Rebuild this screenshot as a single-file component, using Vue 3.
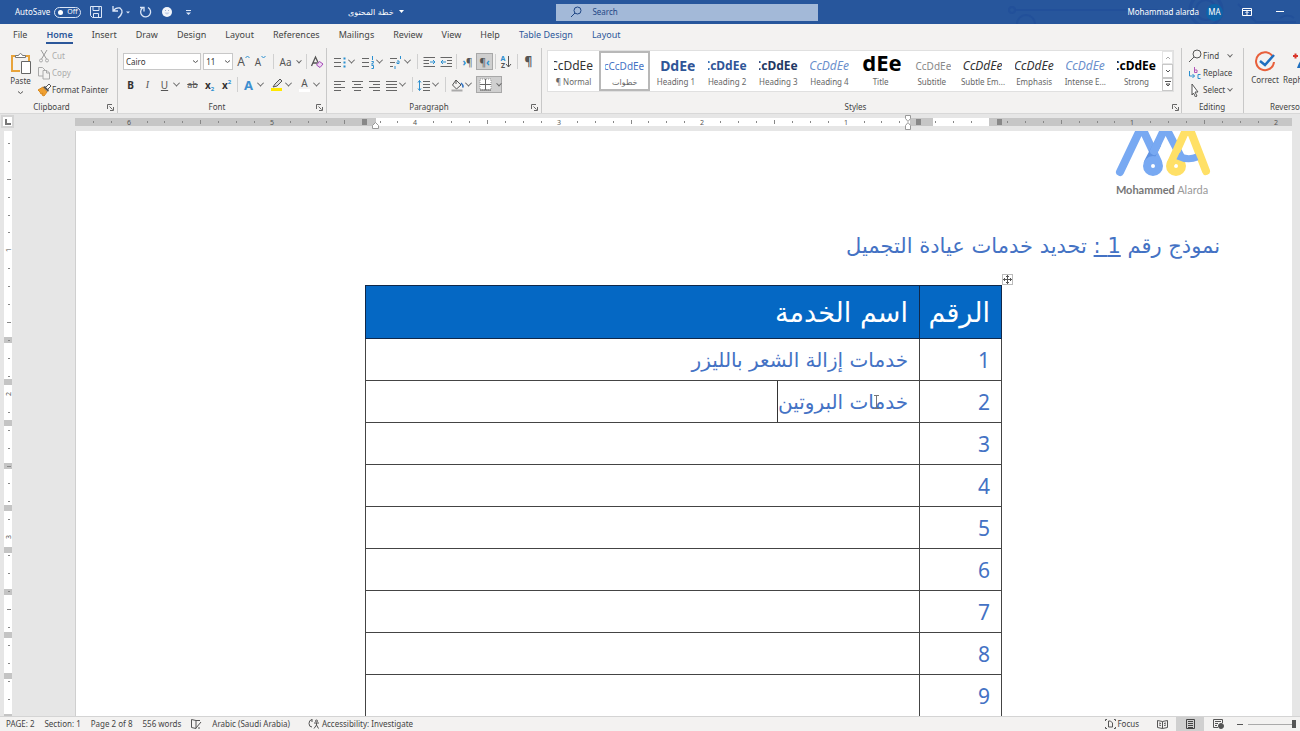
<script setup>
import { ref } from 'vue'

const tabs = [
  { name: 'File' }, { name: 'Home', active: true }, { name: 'Insert' }, { name: 'Draw' },
  { name: 'Design' }, { name: 'Layout' }, { name: 'References' }, { name: 'Mailings' },
  { name: 'Review' }, { name: 'View' }, { name: 'Help' },
  { name: 'Table Design', context: true }, { name: 'Layout', context: true },
]

const styles = [
  { name: '¶ Normal', look: 'normal', sample: 'CcDdEe' },
  { name: 'خطوات', look: 'steps', sample: 'CcCcDdEe', selected: true },
  { name: 'Heading 1', look: 'h1', sample: 'DdEe' },
  { name: 'Heading 2', look: 'h2', sample: 'CcDdEe' },
  { name: 'Heading 3', look: 'h3', sample: 'CcDdEe' },
  { name: 'Heading 4', look: 'h4', sample: 'CcDdEe' },
  { name: 'Title', look: 'title', sample: 'dEe' },
  { name: 'Subtitle', look: 'subtitle', sample: 'CcDdEe' },
  { name: 'Subtle Em...', look: 'subtle', sample: 'CcDdEe' },
  { name: 'Emphasis', look: 'emphasis', sample: 'CcDdEe' },
  { name: 'Intense E...', look: 'intense', sample: 'CcDdEe' },
  { name: 'Strong', look: 'strong', sample: 'CcDdEe' },
]

const services = ref([
  'خدمات إزالة الشعر بالليزر', 'خدمات البروتين', '', '', '', '', '', '', '',
])

const lines = (rows) => rows.map(([a, b], i) => `<path d="M${a} ${3.5 + i * 3}H${b}" stroke="#666"/>`).join('')
const icons = {
  bullets: '<path d="M1 3.5H8M1 7.5H8M1 11.5H8" stroke="#666"/><path d="M10.5 2.5h2v2h-2zM10.5 6.5h2v2h-2zM10.5 10.5h2v2h-2z" fill="#2b8fd0"/>',
  numbers: '<path d="M1 3.5H8M1 7.5H8M1 11.5H8" stroke="#666"/><path d="M11.5 1v4M10.5 6.5h2v1l-2 1.500h2M10.500 10.500h2v3h-2" stroke="#2b8fd0"/>',
  multi: '<path d="M1 3.500H8M1 7.500H6M1 11.500H4" stroke="#666"/><path d="M11.500 1v3M8 6h2v2.500H8V7M6 11v3" stroke="#2b8fd0"/>',
  outdent: '<path d="M1.500 2.500H13M1.500 5.500H7M1.500 8.500H7M1.500 11.500H13" stroke="#666"/><path d="M8 7h5M11 5l2 2-2 2" stroke="#2b8fd0"/>',
  indent: '<path d="M1.500 2.500H13M8 5.500h5M8 8.500h5M1.500 11.500H13" stroke="#666"/><path d="M7 7H2M4 5L2 7l2 2" stroke="#2b8fd0"/>',
  left: lines([[1, 12], [1, 8], [1, 12], [1, 8]]),
  center: lines([[2, 13], [4, 11], [2, 13], [4, 11]]),
  right: lines([[2, 13], [6, 13], [2, 13], [6, 13]]),
  justify: lines([[2, 13], [2, 13], [2, 13], [2, 13]]),
  spacing: '<path d="M6 3.500h7M6 6.500h7M6 9.500h7M6 12.500h7" stroke="#666"/><path d="M2.500 2.500v10M1 4.500l1.500-2 1.500 2M1 10.500l1.500 2 1.500-2" stroke="#2b8fd0"/>',
  shade: '<path d="M6 2l5 5-4.500 4L2.500 7zM6 2v4" stroke="#555"/><path d="M11 5q3 3 1.500 4.500" stroke="#2b6fc0" stroke-width="1.500"/><path d="M1.500 12.500h11" stroke="#aaa" stroke-width="2"/>',
  borders: '<path d="M2 2h11v11H2z" fill="#fff" stroke="#999" stroke-dasharray="1 1"/><path d="M7.500 2v11M2 7.500h11M2 13h11" stroke="#666"/>',
  find: '<circle cx="9" cy="5" r="4" stroke="#555"/><path d="M6 8l-5 5" stroke="#555"/>',
  select: '<path d="M4 1l6 8H7l2 4-1.500 1-2-4L4 12z" fill="#fff" stroke="#555"/>',
  cut: '<path d="M4 1l5.500 9M10 1L4.500 10" stroke="#999"/><circle cx="4" cy="11.500" r="1.500" stroke="#aaa"/><circle cx="10" cy="11.500" r="1.500" stroke="#aaa"/>',
  copy: '<path d="M6 10H1.500V1.500h4L8 4" stroke="#aaa"/><path d="M6 4.500h4l2.500 2.500v6H6zM9.500 4.500V7h3" stroke="#aaa"/>',
  painter: '<path d="M1 7l5-3 4 5-3 4-2-1 1-2-2 1-1-2z" fill="#f0a030" stroke="#d88a20"/><path d="M6 4l2-1 4 4-1 2z" fill="#555"/><path d="M9 4l3-3 2 2-3 3" fill="#fff" stroke="#555"/>',
}
const alignButtons = [['left', 'Align left'], ['center', 'Center'], ['right', 'Align right'], ['justify', 'Justify']]

// One inch on the rulers, divided into eighths.
const inch = 143.4
const makeTicks = (from, to, origin) => {
  const out = []
  for (let i = Math.ceil((from - origin) / inch * 8); origin + i * inch / 8 < to; i++) {
    const kind = i % 8 === 0 ? 'num' : i % 4 === 0 ? 'half' : 'dot'
    out.push({ pos: Math.round(origin + i * inch / 8), kind, label: Math.abs(i / 8) })
  }
  return out
}
const hTicks = makeTicks(1, 1216, 914).filter((t) => t.label !== 0)
const vTicks = makeTicks(4, 585, -24)
const rowMarks = [206, 248, 289, 332, 374, 416, 458, 501, 542, 583]
</script>

<template>
  <div class="app">
    <header class="titlebar">
      <svg class="pattern" width="300" height="24" fill="none" stroke="#22509a" stroke-width="2">
        <path d="M14 10h144" /><circle cx="12" cy="10" r="3" /><circle cx="26" cy="24" r="9" />
        <circle cx="206" cy="10" r="16" stroke-width="3" /><circle cx="206" cy="10" r="10" />
        <path d="M238 4l18 18h40M280 18q8-5 14 0" />
      </svg>
      <div class="quick">
        <label class="autosave">AutoSave <input type="checkbox" role="switch" /><span class="switch"><i></i>Off</span></label>
        <button aria-label="Save"><svg width="14" height="14" fill="none" stroke="#dbe6f7"><path d="M1.500 1.500h11v11h-9l-2-2zM4 1.500v4h6v-4M4.500 12.500v-4h5v4" /></svg></button>
        <button class="undo" aria-label="Undo"><svg width="20" height="14" fill="none" stroke="#dbe6f7" stroke-width="1.300"><path d="M2 1v5h5M2 6q3-4 7-3 5 4-2 10" /><path d="M15 6.500h4l-2 2z" fill="#dbe6f7" stroke="none" /></svg></button>
        <button aria-label="Redo"><svg width="14" height="14" fill="none" stroke="#dbe6f7" stroke-width="1.300"><path d="M1 2.500h4v4M9 2.500a5 5 0 1 1-5.500.5" /></svg></button>
        <button aria-label="Feedback"><svg width="14" height="14"><circle cx="7" cy="7" r="5" fill="#f2f5fa" /><path d="M4.500 7.500q2.500 4 5 0" fill="#c3cfe6" /><path d="M5 5.500h1M8 5.500h1" stroke="#9fb0d4" /></svg></button>
        <button aria-label="Customize quick access"><svg width="14" height="14"><path d="M5 5.500h5" stroke="#dbe6f7" /><path d="M5 7.500h5L7.500 10z" fill="#dbe6f7" /></svg></button>
      </div>
      <button class="docname"><svg width="5" height="4"><path d="M0 0h5L2.500 3z" fill="#fff" /></svg><span dir="rtl">خطة المحتوى</span></button>
      <label class="search">
        <svg width="12" height="12" fill="none" stroke="#1f4684"><circle cx="7.500" cy="4.500" r="3.500" /><path d="M5 7l-4 4" /></svg>
        <input type="search" placeholder="Search" aria-label="Search" />
      </label>
      <div class="account">
        <span>Mohammad alarda</span><span class="avatar">MA</span>
        <button aria-label="Ribbon display options"><svg width="10" height="8" fill="none" stroke="#fff"><path d="M.5.5h9v7h-9zM.5 2.500h9M5 7V3.500M3.500 5L5 3.500 6.500 5" /></svg></button>
        <button aria-label="Minimize"><svg width="8" height="8"><path d="M0 3.500h8" stroke="#fff" /></svg></button>
      </div>
    </header>

    <nav class="tabs">
      <button v-for="(t, i) in tabs" :key="i" :class="{ active: t.active, context: t.context }">{{ t.name }}</button>
    </nav>

    <section class="ribbon">
      <div class="group clipboard">
        <div class="body">
          <button class="paste">
            <svg width="22" height="23" fill="none"><path d="M8 4H2v15h8M15 4h4v5" stroke="#e8a33a" stroke-width="2" /><path d="M5.500 5.500V3.500h3q2-4 4 0h3v2z" fill="#fff" stroke="#777" /><path d="M11.500 9.500h9v12h-9z" fill="#fff" stroke="#666" /></svg>
            <span>Paste</span>
            <svg width="5" height="4" fill="none" stroke="#555"><path d="M0 .5l2.500 2L5 .5" /></svg>
          </button>
          <div class="stack">
            <button class="off"><svg width="14" height="14" fill="none" v-html="icons.cut"></svg>Cut</button>
            <button class="off"><svg width="14" height="14" fill="none" v-html="icons.copy"></svg>Copy</button>
            <button><svg width="14" height="14" fill="none" v-html="icons.painter"></svg>Format Painter</button>
          </div>
        </div>
        <div class="label"><span>Clipboard</span><button class="launch" aria-label="Clipboard options"><svg width="7" height="7" fill="none" stroke="#666"><path d="M.5 5V.5H5M2.500 2.500l3 3M6.500 3v3.500H3" /></svg></button></div>
      </div>

      <div class="group font">
        <div class="body rows">
          <div class="row">
            <select class="face" aria-label="Font"><option>Cairo</option></select>
            <select class="size" aria-label="Font size"><option>11</option></select>
            <button class="ic grow" aria-label="Grow font">A<svg width="5" height="4" fill="none" stroke="#2b8fd0"><path d="M.5 3L2.500 1l2 2" /></svg></button>
            <button class="ic shrink" aria-label="Shrink font">A<svg width="5" height="4" fill="none" stroke="#2b8fd0"><path d="M.5 1l2 2 2-2" /></svg></button>
            <i class="sep"></i>
            <button class="ic case">Aa<span class="chev"></span></button>
            <i class="sep"></i>
            <button class="ic" aria-label="Clear formatting"><svg width="14" height="14" fill="none"><path d="M1.500 11L5.500 2l3 6.500M3 8h4" stroke="#555" stroke-width="1.300" /><path d="M6.500 10l3-3.500 3.500 2.500-3 3.500z" fill="#efd9f3" stroke="#a54cb8" /></svg></button>
          </div>
          <div class="row">
            <button class="ic b">B</button><button class="ic i">I</button><button class="ic u">U</button><button class="dd" aria-label="Underline options"></button>
            <button class="ic s">ab</button><button class="ic x">x<sub>2</sub></button><button class="ic x">x<sup>2</sup></button>
            <i class="sep"></i>
            <button class="ic fx">A</button><button class="dd" aria-label="Text effects options"></button>
            <button class="ic" aria-label="Highlight"><svg width="14" height="14" fill="none"><path d="M3 9l2-3 5-5 2 2-5 5z" fill="#ddd" stroke="#555" /><path d="M1 11.500h11" stroke="#ffe800" stroke-width="3" /></svg></button><button class="dd" aria-label="Highlight options"></button>
            <button class="ic fc">A</button><button class="dd" aria-label="Font colour options"></button>
          </div>
        </div>
        <div class="label"><span>Font</span><button class="launch" aria-label="Font options"><svg width="7" height="7" fill="none" stroke="#666"><path d="M.5 5V.5H5M2.500 2.500l3 3M6.500 3v3.500H3" /></svg></button></div>
      </div>

      <div class="group para">
        <div class="body rows">
          <div class="row">
            <template v-for="n in ['bullets', 'numbers', 'multi']" :key="n">
              <button class="ic" :aria-label="n"><svg width="14" height="14" fill="none" v-html="icons[n]"></svg></button><button class="dd" :aria-label="n + ' options'"></button>
            </template>
            <i class="sep"></i>
            <button class="ic" aria-label="Decrease indent"><svg width="14" height="14" fill="none" v-html="icons.outdent"></svg></button>
            <button class="ic" aria-label="Increase indent"><svg width="14" height="14" fill="none" v-html="icons.indent"></svg></button>
            <i class="sep"></i>
            <button class="ic dir"><b>›</b>¶</button>
            <button class="ic dir on">¶<b>‹</b></button>
            <i class="sep"></i>
            <button class="ic sort" aria-label="Sort"><span><b>A</b><em>Z</em></span><svg width="7" height="12" fill="none" stroke="#555"><path d="M3.500 0v11M1 8l2.500 3L6 8" /></svg></button>
            <i class="sep"></i>
            <button class="ic pil">¶</button>
          </div>
          <div class="row">
            <button v-for="[n, l] in alignButtons" :key="n" class="ic" :aria-label="l"><svg width="14" height="14" fill="none" v-html="icons[n]"></svg></button><button class="dd" aria-label="Justify options"></button>
            <i class="sep"></i>
            <button class="ic" aria-label="Line spacing"><svg width="14" height="14" fill="none" v-html="icons.spacing"></svg></button><button class="dd" aria-label="Spacing options"></button>
            <i class="sep"></i>
            <button class="ic" aria-label="Shading"><svg width="14" height="14" fill="none" v-html="icons.shade"></svg></button><button class="dd" aria-label="Shading options"></button>
            <button class="ic on wide" aria-label="Borders"><svg width="15" height="15" fill="none" v-html="icons.borders"></svg><span class="chev"></span></button>
          </div>
        </div>
        <div class="label"><span>Paragraph</span><button class="launch" aria-label="Paragraph options"><svg width="7" height="7" fill="none" stroke="#666"><path d="M.5 5V.5H5M2.500 2.500l3 3M6.500 3v3.500H3" /></svg></button></div>
      </div>

      <div class="group styles">
        <div class="body">
          <div class="gallery">
            <button v-for="s in styles" :key="s.name" class="style" :class="[s.look, { selected: s.selected }]">
              <span class="sample"><span>{{ s.sample }}</span></span>
              <span class="name">{{ s.name }}</span>
            </button>
            <div class="scroll">
              <button aria-label="Previous styles"><svg width="6" height="4" fill="none" stroke="#aaa"><path d="M1 3l2-2 2 2" /></svg></button>
              <button aria-label="Next styles"><svg width="6" height="4" fill="none" stroke="#555"><path d="M1 1l2 2 2-2" /></svg></button>
              <button aria-label="More styles"><svg width="6" height="6" fill="none" stroke="#555"><path d="M0 .5h6M1 3h4L3 5z" /></svg></button>
            </div>
          </div>
        </div>
        <div class="label"><span>Styles</span><button class="launch" aria-label="Style options"><svg width="7" height="7" fill="none" stroke="#666"><path d="M.5 5V.5H5M2.500 2.500l3 3M6.500 3v3.500H3" /></svg></button></div>
      </div>

      <div class="group editing">
        <div class="body">
          <div class="stack">
            <button><svg width="14" height="14" fill="none" v-html="icons.find"></svg>Find<span class="chev far"></span></button>
            <button class="swap"><svg width="14" height="14" fill="none"><path d="M6.500 1v5.500h2.500V4H6.500" stroke="#b455b8" /><path d="M12.500 8.500H10v4h2.500M1.500 5v5h5M4.500 8l2 2-2 2" stroke="#2b8fd0" /></svg>Replace</button>
            <button><svg width="14" height="14" fill="none" v-html="icons.select"></svg>Select<span class="chev"></span></button>
          </div>
        </div>
        <div class="label"><span>Editing</span></div>
      </div>

      <div class="group reverso">
        <div class="body">
          <button class="big"><svg width="22" height="22" fill="none"><path d="M19 6a9 9 0 1 0 1 5" stroke="#e8603c" stroke-width="2" /><path d="M6 10l5 4 9-10" stroke="#1e6fbf" stroke-width="2.500" /></svg>Correct</button>
          <button class="big"><svg width="22" height="22" fill="none"><path d="M1 5h5M3.500 2.500v5" stroke="#d9362b" stroke-width="2" /><path d="M5 17q3-10 12-13l-6 13z" fill="#1e6fbf" /></svg>Rephrase</button>
        </div>
        <div class="label"><span>Reverso</span></div>
      </div>
    </section>

    <div class="hruler">
      <button class="tabstop" aria-label="Tab stop"><svg width="6" height="6"><path d="M1 0v5h5" fill="none" stroke="#777" stroke-width="2" /></svg></button>
      <svg class="htrack" height="17" aria-hidden="true">
        <rect y="4" width="100%" height="8" fill="#c6c6c6" />
        <rect x="301" y="4" width="534" height="8" fill="#fff" /><rect x="858" y="4" width="56" height="8" fill="#fff" />
        <g fill="#888"><rect x="287" y="5" width="5" height="6" /><rect x="841" y="5" width="5" height="6" /><rect x="922" y="5" width="5" height="6" /></g>
        <template v-for="t in hTicks" :key="t.pos">
          <text v-if="t.kind === 'num'" :x="t.pos" y="11" class="tick" text-anchor="middle">{{ t.label }}</text>
          <rect v-else :x="t.pos" :y="t.kind === 'half' ? 6 : 7" width="1" :height="t.kind === 'half' ? 4 : 2" fill="#888" />
        </template>
        <g fill="#fff" stroke="#999"><path d="M297.500 14.500v-3l3-3 3 3v3z" /><path d="M830.500 1.500h5v3l-2.500 3-2.500-3zM830.500 11.500l2.500-3 2.500 3v4h-5z" /></g>
      </svg>
    </div>

    <main class="workspace">
      <svg class="vruler" width="12" height="585" aria-hidden="true">
        <rect x="4" width="8" height="585" fill="#fff" />
        <rect v-for="m in rowMarks" :key="m" x="4" :y="m" width="8" height="6" fill="#c4c4c4" />
        <template v-for="t in vTicks" :key="t.pos">
          <text v-if="t.kind === 'num' && t.label < 4" class="tick" text-anchor="middle" :transform="`translate(11 ${t.pos}) rotate(-90)`">{{ t.label }}</text>
          <rect v-else :x="t.kind === 'half' ? 7 : 8" :y="t.pos" :width="t.kind === 'half' ? 4 : 2" height="1" fill="#888" />
        </template>
      </svg>
      <article class="page" dir="rtl">
        <div class="logo" dir="ltr">
          <svg width="100" height="48" fill="none" stroke-width="8" stroke-linecap="round" stroke-linejoin="round">
            <path d="M8 41L27 1h5l14 30" stroke="#78a9f2" />
            <path d="M45 14L36 31" stroke="#5f92e2" />
            <path d="M42 20L51 1h5l13 25" stroke="#78a9f2" />
            <circle cx="41" cy="35" r="6" stroke="#78a9f2" />
            <path d="M59 32L73 1h6l15 39" stroke="#ffe066" />
            <circle cx="64" cy="35" r="6" stroke="#ffe066" />
            <path d="M66 25q10 5 19 1" stroke="#78a9f2" stroke-width="7" stroke-linecap="butt" />
          </svg>
          <p><b>Mohammed</b> Alarda</p>
        </div>
        <h1>نموذج رقم <u>1 :</u> تحديد خدمات عيادة التجميل</h1>
        <div class="sheet">
          <button class="move" aria-label="Move table"><svg width="9" height="9" fill="none" stroke="#555"><path d="M4.500 0v9M0 4.500h9M3 1.500h3M3 7.500h3M1.500 3v3M7.500 3v3" /></svg></button>
          <table>
            <thead><tr><th class="num">الرقم</th><th>اسم الخدمة</th></tr></thead>
            <tbody>
              <tr v-for="(s, i) in services" :key="i">
                <td class="num">{{ i + 1 }}</td>
                <td><div class="cell">{{ s }}<template v-if="i === 1"><i class="caret"></i><svg class="ibeam" width="7" height="14" fill="none" stroke="#777"><path d="M1 .5h5M1 13.500h5M3.500 1v12" /></svg></template></div></td>
              </tr>
            </tbody>
          </table>
        </div>
      </article>
    </main>

    <footer class="status">
      <span>PAGE: 2</span><span>Section: 1</span><span>Page 2 of 8</span><span>556 words</span>
      <svg width="11" height="10" fill="none" stroke="#555"><path d="M5 9.500L.5 8.500v-8L5 1.500zM5 1.500h4M5 9l5-6M7 9h2" /></svg>
      <span>Arabic (Saudi Arabia)</span>
      <span class="acc"><svg width="11" height="10" fill="none" stroke="#555"><path d="M4 .5Q1 1 1 4.500T4 8M4 0v3M6 4h5M8.500 4v2L6 9.500M8.500 6l2 3.500" /><circle cx="8.500" cy="2" r="1" /></svg>Accessibility: Investigate</span>
      <div class="views">
        <button class="focus"><svg width="11" height="10" fill="none" stroke="#555"><path d="M.5 2V.5H2M9 .5h1.500V2M.5 8v1.500H2M9 9.500h1.500V8M3.500 2v6h4V4l-2-2z" /></svg>Focus</button>
        <button aria-label="Read mode"><svg width="11" height="9" fill="none" stroke="#555"><path d="M5.500 1.500L.5.5v7l5 1 5-1v-7zM5.500 1.500v7M2 3l2 .5M2 5l2 .5M7 3.500L9 3M7 5.500L9 5" /></svg></button>
        <button class="current" aria-label="Print layout"><svg width="9" height="10" fill="none" stroke="#444"><path d="M.5.5h8v9h-8zM2 2.500h5M2 4.500h5M2 6.500h5M2 8.500h5" /></svg></button>
        <button aria-label="Web layout"><svg width="11" height="10" fill="none" stroke="#555"><path d="M9.500 4V.5h-9v8H5M2 2.500h6M2 4.500h3M2 6.500h2" /><circle cx="8" cy="7" r="2.500" fill="#555" /></svg></button>
        <button class="minus" aria-label="Zoom out"><svg width="6" height="6"><path d="M0 3.500h6" stroke="#555" /></svg></button>
        <input type="range" aria-label="Zoom" min="0" max="100" value="100" />
      </div>
    </footer>
  </div>
</template>

<style>
body { background: #e6e6e6; }
</style>

<style scoped>
* { box-sizing: border-box; }
.app { display: flex; flex-direction: column; height: 100vh; overflow: hidden; font: 9px/12px "Noto Sans", "Open Sans", "DejaVu Sans", sans-serif; color: #444; background: #e6e6e6; }
button { display: inline-flex; align-items: center; justify-content: center; padding: 0; border: 0; background: none; font: inherit; color: inherit; white-space: nowrap; }
svg { flex: none; }
.titlebar { position: relative; display: flex; align-items: center; height: 24px; flex: none; background: #27569c; color: #fff; font-size: 8px; }
.pattern { position: absolute; right: 0; top: 0; }
.quick { display: flex; align-items: center; gap: 10px; width: 348px; padding-left: 15px; }
.autosave { display: flex; align-items: center; gap: 4px; margin-right: -2px; }
.autosave input { position: absolute; opacity: 0; width: 26px; height: 12px; margin: 0; }
.switch { display: flex; align-items: center; gap: 4px; width: 27px; height: 11px; border: 1px solid #dbe6f7; border-radius: 6px; padding-left: 3px; font-size: 7px; }
.switch i { width: 5px; height: 5px; border-radius: 50%; background: #fff; }
.undo { margin: 0 -2px; }
.quick button:nth-last-child(-n+2) { margin-left: -3px; }
.docname { flex-direction: row-reverse; gap: 5px; font: 8px "DejaVu Sans", sans-serif; }
.search { position: absolute; left: 42.8%; width: 20.1%; height: 17px; display: flex; align-items: center; gap: 10px; padding-left: 14px; background: #a3b9d8; }
.search input { width: 100px; border: 0; padding: 0; background: none; font: inherit; outline: 0; }
.search input::placeholder { color: #1f4684; opacity: 1; }
.account { position: relative; margin-left: auto; display: flex; align-items: center; padding-right: 16px; }
.avatar { display: grid; place-items: center; width: 17px; height: 17px; margin: 0 19px 0 7px; border-radius: 50%; background: #0f63a8; }
.account button + button { margin-left: 24px; }
.tabs { display: flex; gap: 19px; height: 24px; flex: none; padding: 1px 13px 0; background: #f3f2f1; }
.tabs button { height: 19px; padding-top: 2px; border-bottom: 2px solid transparent; }
.tabs .active { font-weight: 600; color: #2b579a; border-color: #2b579a; }
.tabs .context { color: #2b579a; }
.ribbon { display: flex; height: 66px; flex: none; background: #f3f2f1; border-bottom: 1px solid #d8d8d8; font-size: 8px; }
.group { display: flex; flex-direction: column; flex: none; border-right: 1px solid #c8c8c8; }
.body { display: flex; height: 53px; }
.label { position: relative; display: flex; justify-content: center; height: 12px; line-height: 12px; padding-right: 14px; }
.launch { position: absolute; right: 3px; top: 3px; }
.clipboard { width: 118px; }
.paste { flex-direction: column; width: 36px; height: 46px; padding-left: 5px; margin-top: 2px; }
.paste svg:last-child { margin-top: 4px; }
.stack { display: flex; flex-direction: column; align-items: flex-start; gap: 1px; padding: 0 0 0 1px; }
.stack button { height: 16px; gap: 1px; }
.off { color: #aaa; }
.font { width: 209px; padding-left: 4px; }
.rows { flex-direction: column; gap: 6px; padding-top: 5px; }
.row { display: flex; align-items: center; height: 17px; }
.face, .size { height: 17px; border: 1px solid #c8c8c8; border-radius: 0; padding: 0 2px; appearance: none; font: inherit; color: #333; background: #fff url("data:image/svg+xml,%3Csvg xmlns='http://www.w3.org/2000/svg' width='5' height='4'%3E%3Cpath d='M0 .5l2.500 2 2.500-2' fill='none' stroke='%23555'/%3E%3C/svg%3E") no-repeat right 2px center; }
.face { width: 79px; margin: 0 2px 0 1px; }
.size { width: 30px; }
.ic { width: 17px; height: 17px; flex: none; font-size: 10px; color: #555; }
.ic sup, .ic sub { font-size: 6px; color: #2b8fd0; line-height: 6px; }
.ic sup { align-self: flex-start; margin-top: 3px; }
.ic sub { align-self: flex-end; margin-bottom: 1px; }
.grow { margin-left: 2px; font-size: 12px; }
.shrink { margin-right: 2px; }
.grow svg, .shrink svg { align-self: flex-start; margin-top: 2px; }
.case { width: 28px; gap: 3px; }
.sep { width: 1px; height: 15px; margin: 0 2px; background: #d0d0d0; }
.dd { width: 11px; height: 17px; padding-right: 4px; }
.dd::before, .chev { content: ""; width: 4px; height: 4px; border: solid #666; border-width: 0 1px 1px 0; transform: rotate(45deg) translate(-1px, -1px); }
.b, .x { font-weight: 700; color: #333; }
.i { font-style: italic; font-family: "Liberation Serif", serif; }
.u { text-decoration: underline; }
.s { text-decoration: line-through; font-size: 9px; }
.fx { font-weight: 700; font-size: 13px; color: #3d8fd0; }
.fc { border-bottom: 3px solid #fff; height: 14px; width: 11px; margin: 0 3px; }
.para { width: 215px; padding-left: 4px; }
.on { background: #cfcfcf; border: 1px solid #a8a8a8; }
.wide { width: 26px; gap: 2px; }
.dir b { color: #2b8fd0; }
.sort span { display: flex; flex-direction: column; font-size: 7px; line-height: 7px; }
.sort b { color: #2b8fd0; }
.sort em { font-style: normal; font-weight: 700; }
.pil { font-size: 12px; font-weight: 700; }
.styles { flex: 1 0 640px; min-width: 0; padding: 2px 7px 0 5px; }
.styles .body { height: 51px; }
.styles .label { padding-right: 10px; }
.styles .launch { right: -5px; }
.gallery { display: flex; width: 100%; height: 42px; border: 1px solid #e0e0e0; background: #fff; }
.style { flex: 1 1 51px; min-width: 0; flex-direction: column; justify-content: flex-start; height: 40px; padding-top: 5px; }
.style.selected { border: 2px solid #b8b8b8; padding-top: 3px; }
.sample { display: flex; justify-content: flex-end; align-items: center; width: 39px; height: 20px; overflow: hidden; font-size: 12px; line-height: 20px; color: #333; }
.name { height: 12px; line-height: 12px; color: #666; }
.selected .sample { font-size: 10px; color: #4472c4; }
.h1 .sample { font-size: 14px; font-weight: 700; color: #2f5597; }
.h2 .sample { font-weight: 700; color: #2f5597; }
.h3 .sample { font-weight: 700; color: #1f3864; }
.h4 .sample, .intense .sample { font-style: italic; color: #6a8fcc; }
.title .sample { font-size: 22px; font-weight: 700; color: #000; width: 42px; line-height: 12px; align-items: flex-start; }
.subtitle .sample { font-size: 10px; color: #888; }
.subtle .sample, .emphasis .sample { font-style: italic; }
.strong .sample { font-weight: 700; color: #000; }
.scroll { display: flex; flex-direction: column; width: 11px; height: 40px; flex: none; }
.scroll button { flex: 1; border: 1px solid #c8c8c8; }
.scroll button:first-child { border-color: #e4e4e4; }
.editing { width: 62px; padding-left: 5px; }
.editing .label { padding-right: 6px; }
.chev { margin-left: 2px; flex: none; }
.far { margin-left: 8px; }
.reverso { width: 57px; border: 0; overflow: hidden; }
.big { flex-direction: column; width: 42px; height: 36px; margin-top: 2px; flex: none; gap: 1px; }
.big + .big { margin-left: -3px; align-items: flex-start; width: 44px; }
.big + .big svg { margin-left: 9px; }
.reverso .label { padding: 0 0 0 26px; justify-content: flex-start; }
.hruler { display: flex; height: 17px; flex: none; padding-right: 8px; }
.tabstop { width: 13px; height: 13px; margin: 1px 61px 0 1px; border: 2px solid #d4d4d4; background: #fff; }
.htrack { flex: 1; min-width: 0; }
.tick { font-size: 7px; fill: #555; }
.workspace { display: flex; flex: 1; min-height: 0; overflow: hidden; }
.vruler { margin-right: 63px; }
.page { flex: 1; min-width: 0; margin-right: 8px; background: #fff; border-left: 1px solid #cfcfcf; font-family: "DejaVu Sans", sans-serif; color: #4472c4; }
.logo { width: 100px; height: 74px; margin-right: 80px; color: #999; text-align: center; font: 11px/14px Lato, sans-serif; }
.logo svg { display: block; }
.logo p { margin: 4px 0 0; white-space: nowrap; }
.logo b { color: #777; }
h1 { margin: 21px 72px 0; height: 39px; font-size: 21px; line-height: 40px; font-weight: 400; }
.sheet { position: relative; padding: 20px 290px 0 289px; }
.move { position: absolute; right: 279px; top: 9px; width: 11px; height: 11px; border: 1px solid #bbb; background: #fff; }
table { width: 100%; table-layout: fixed; border-collapse: collapse; font-size: 20px; }
th, td { height: 42px; padding: 0 11px; border: 1px solid #444; text-align: right; font-weight: 400; line-height: 42px; }
thead tr { background: #0568c4; }
th { height: 53px; padding-top: 2px; border-color: #10284a; color: #fff; font-size: 27px; white-space: nowrap; }
.num { width: 82px; }
td.num { font: 21px/40px "Noto Sans", sans-serif; }
.cell { position: relative; display: flex; height: 41px; }
.caret { width: 1px; height: 41px; background: #333; }
.ibeam { position: absolute; right: 28px; top: 14px; }
.status { display: flex; align-items: center; height: 15px; flex: none; padding-left: 6px; background: #f3f2f1; border-top: 1px solid #d4d4d4; font-size: 8px; white-space: nowrap; gap: 10px; }
.acc { display: flex; gap: 3px; align-items: center; margin-left: 8px; }
.views { display: flex; align-items: center; height: 15px; margin-left: auto; }
.views button { width: 28px; height: 15px; }
.views .focus { width: auto; gap: 1px; margin-right: 9px; }
.views .current { background: #d0d0d0; }
.views .minus { width: 16px; }
.views input { appearance: none; width: 48px; height: 14px; margin: 0 4px 0 0; background: linear-gradient(#aaa, #aaa) no-repeat center / 100% 1px; }
.views input::-webkit-slider-thumb { appearance: none; width: 4px; height: 8px; background: #555; }
</style>
